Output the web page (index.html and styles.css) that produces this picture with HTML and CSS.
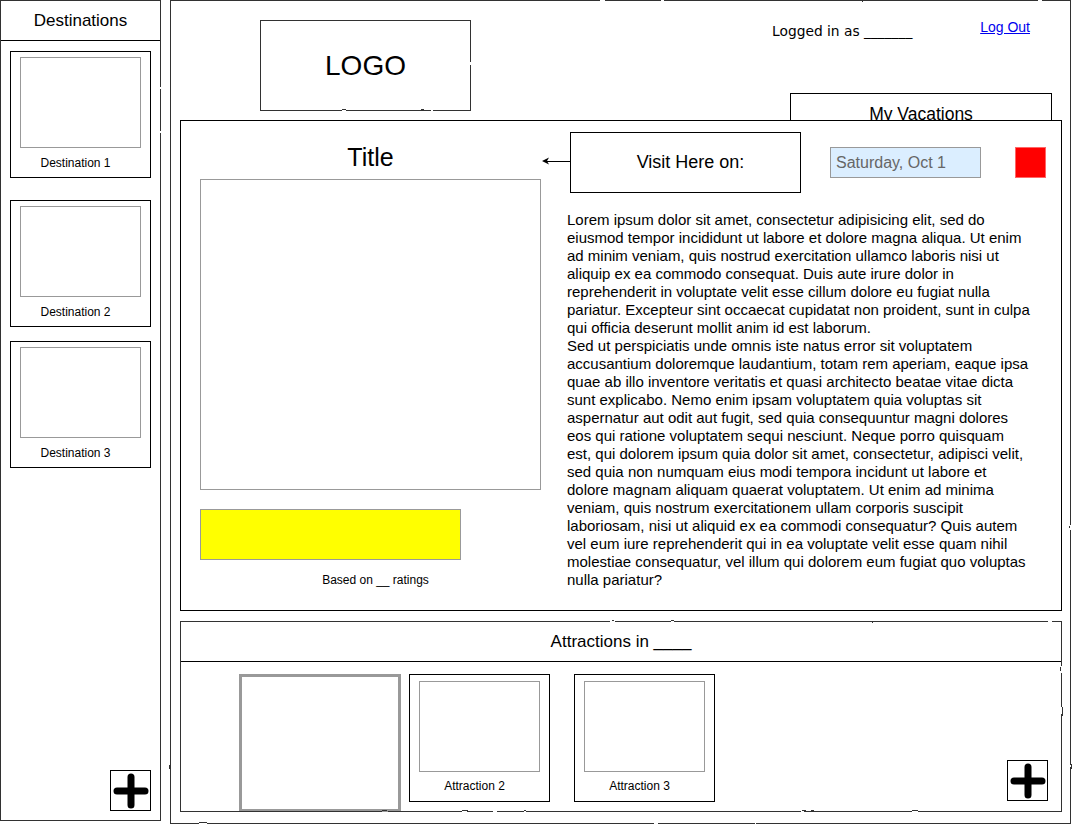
FILE: index.html
```html
<!DOCTYPE html>
<html>
<head>
    <title>Vacation Planner</title>
    <link rel="stylesheet" href="styles.css">
</head>
<body>

    <!-- wobbly pencil line used by the sketch frames -->
    <svg class="defs" width="0" height="0">
        <filter id="rough" x="-2%" y="-2%" width="104%" height="104%">
            <feTurbulence type="fractalNoise" baseFrequency="0.05" numOctaves="2" seed="3" />
            <feDisplacementMap in="SourceGraphic" scale="2" />
        </filter>
    </svg>

    <div class="sidebar rough">
        <div class="sidebar-head">Destinations</div>

        <div class="dest-list">
            <div class="card dest-card">
                <div class="thumb"></div>
                <p class="card-label">Destination 1</p>
            </div>
            <div class="card dest-card second">
                <div class="thumb"></div>
                <p class="card-label">Destination 2</p>
            </div>
            <div class="card dest-card third">
                <div class="thumb"></div>
                <p class="card-label">Destination 3</p>
            </div>
        </div>

        <div class="add-btn side-add">
            <svg width="38" height="38" viewBox="0 0 38 38">
                <path d="M19 5 V33 M5 19 H33" stroke="#000" stroke-width="7" stroke-linecap="round" fill="none" />
            </svg>
        </div>
    </div>

    <div class="main rough">
        <div class="topbar">
            <div class="logo rough">LOGO</div>

            <div class="account">
                <div class="login-row">
                    <span class="logged">Logged in as _______</span>
                    <a href="#" class="logout">Log Out</a>
                </div>
                <div class="vacations">My Vacations</div>
            </div>
        </div>

        <div class="detail">
            <div class="detail-left">
                <h2 class="title">Title</h2>
                <div class="photo"></div>
                <div class="rating"></div>
                <p class="rating-note">Based on __ ratings</p>
            </div>

            <div class="detail-right">
                <div class="visit-row">
                    <svg class="arrow" width="29" height="10" viewBox="0 0 29 10">
                        <path d="M29 5.5 H3" stroke="#000" stroke-width="1" fill="none" />
                        <path d="M1 5 L8 1.5 L6 5 L8 8.5 Z" fill="#000" />
                    </svg>
                    <div class="visit-box">Visit Here on:</div>
                    <div class="date-field">Saturday, Oct 1</div>
                    <div class="red-btn"></div>
                </div>

                <!-- line breaks kept as in the mockup -->
                <p class="blurb">Lorem ipsum dolor sit amet, consectetur adipisicing elit, sed do<br>
eiusmod tempor incididunt ut labore et dolore magna aliqua. Ut enim<br>
ad minim veniam, quis nostrud exercitation ullamco laboris nisi ut<br>
aliquip ex ea commodo consequat. Duis aute irure dolor in<br>
reprehenderit in voluptate velit esse cillum dolore eu fugiat nulla<br>
pariatur. Excepteur sint occaecat cupidatat non proident, sunt in culpa<br>
qui officia deserunt mollit anim id est laborum.<br>
Sed ut perspiciatis unde omnis iste natus error sit voluptatem<br>
accusantium doloremque laudantium, totam rem aperiam, eaque ipsa<br>
quae ab illo inventore veritatis et quasi architecto beatae vitae dicta<br>
sunt explicabo. Nemo enim ipsam voluptatem quia voluptas sit<br>
aspernatur aut odit aut fugit, sed quia consequuntur magni dolores<br>
eos qui ratione voluptatem sequi nesciunt. Neque porro quisquam<br>
est, qui dolorem ipsum quia dolor sit amet, consectetur, adipisci velit,<br>
sed quia non numquam eius modi tempora incidunt ut labore et<br>
dolore magnam aliquam quaerat voluptatem. Ut enim ad minima<br>
veniam, quis nostrum exercitationem ullam corporis suscipit<br>
laboriosam, nisi ut aliquid ex ea commodi consequatur? Quis autem<br>
vel eum iure reprehenderit qui in ea voluptate velit esse quam nihil<br>
molestiae consequatur, vel illum qui dolorem eum fugiat quo voluptas<br>
nulla pariatur?</p>
            </div>
        </div>

        <div class="attractions rough">
            <div class="attr-head">Attractions in ____</div>
            <div class="attr-list">
                <div class="attr-empty"></div>
                <div class="card attr-card">
                    <div class="thumb"></div>
                    <p class="card-label">Attraction 2</p>
                </div>
                <div class="card attr-card">
                    <div class="thumb"></div>
                    <p class="card-label">Attraction 3</p>
                </div>
                <div class="add-btn attr-add">
                    <svg width="38" height="38" viewBox="0 0 38 38">
                        <path d="M19 5 V33 M5 19 H33" stroke="#000" stroke-width="7" stroke-linecap="round" fill="none" />
                    </svg>
                </div>
            </div>
        </div>
    </div>

</body>
</html>
```

FILE: styles.css
```css
body {
    margin: 0;
    display: flex;
    font-family: "Liberation Sans", Arial, sans-serif;
    color: #000;
    background-color: #fff;
}

.defs {
    position: absolute;
}

/* sketchy frame drawn on a pseudo element so only the line wobbles */
.rough {
    position: relative;
}
.rough::before {
    content: "";
    position: absolute;
    inset: 0;
    border: 1.5px solid #333;
    filter: url(#rough);
    pointer-events: none;
}

/* ---------- sidebar ---------- */
.sidebar {
    width: 161px;
    height: 821px;
    box-sizing: border-box;
    display: flex;
    flex-direction: column;
}
.sidebar-head {
    height: 41px;
    box-sizing: border-box;
    border: 1px solid #000;
    display: flex;
    align-items: center;
    justify-content: center;
    font-size: 17px;
    padding-top: 1px;
}
.dest-list {
    display: flex;
    flex-direction: column;
    padding: 10px 0 0 10px;
}
.card {
    box-sizing: border-box;
    border: 1px solid #000;
    background-color: #fff;
    display: flex;
    flex-direction: column;
    align-items: center;
}
.dest-card {
    width: 141px;
    height: 127px;
    padding-top: 5px;
}
.dest-card.second {
    margin-top: 22px;
}
.dest-card.third {
    margin-top: 14px;
}
.thumb {
    width: 121px;
    height: 91px;
    box-sizing: border-box;
    border: 1px solid #999;
}
.card-label {
    margin: 7px 10px 0 0;
    font-size: 12px;
    line-height: 16px;
}

.add-btn {
    width: 41px;
    height: 41px;
    box-sizing: border-box;
    border: 1px solid #000;
    display: flex;
    align-items: center;
    justify-content: center;
    background-color: #fff;
}
.side-add {
    margin-top: auto;
    align-self: flex-end;
    margin-right: 10px;
    margin-bottom: 10px;
}

/* ---------- main frame ---------- */
.main {
    width: 901px;
    height: 824px;
    margin-left: 9px;
    box-sizing: border-box;
    display: flex;
    flex-direction: column;
}
.topbar {
    height: 120px;
    display: flex;
    overflow: hidden;
    flex-shrink: 0;
}
.logo {
    width: 211px;
    height: 91px;
    margin: 20px 0 0 90px;
    display: flex;
    align-items: center;
    justify-content: center;
    font-size: 28px;
    padding-top: 1px;
    box-sizing: border-box;
}
.account {
    margin-left: auto;
    margin-right: 19px;
    width: 280px;
    display: flex;
    flex-direction: column;
}
.login-row {
    display: flex;
    justify-content: space-between;
    padding: 19px 22px 0 0;
}
.logged {
    padding-top: 4px;
    font-family: "DejaVu Sans", Verdana, sans-serif;
    font-size: 13.8px;
}
.logout {
    color: #00e;
    text-decoration: underline;
    font-size: 14px;
}
.vacations {
    margin: 54px 0 0 18px;
    height: 40px;
    box-sizing: border-box;
    border: 1px solid #000;
    text-align: center;
    font-size: 17.5px;
    padding-top: 10px;
}

/* ---------- detail panel ---------- */
.detail {
    margin: 0 9px 0 10px;
    height: 491px;
    box-sizing: border-box;
    border: 1px solid #000;
    display: flex;
    flex-shrink: 0;
}
.detail-left {
    width: 341px;
    padding: 22px 0 0 19px;
    flex-shrink: 0;
}
.title {
    margin: 0;
    font-size: 25px;
    font-weight: normal;
    line-height: 28px;
    text-align: center;
}
.photo {
    margin-top: 8px;
    height: 311px;
    box-sizing: border-box;
    border: 1px solid #999;
}
.rating {
    margin-top: 19px;
    width: 261px;
    height: 51px;
    box-sizing: border-box;
    border: 1px solid #999;
    background-color: #ffff00;
}
.rating-note {
    margin: 12px 0 0 0;
    padding-left: 10px;
    font-size: 12px;
    line-height: 16px;
    text-align: center;
}

.detail-right {
    flex: 1;
}
.visit-row {
    display: flex;
    align-items: center;
    margin-top: 11px;
}
.arrow {
    display: block;
    margin-top: -3px;
}
.visit-box {
    width: 231px;
    height: 61px;
    box-sizing: border-box;
    border: 1px solid #000;
    display: flex;
    align-items: center;
    justify-content: center;
    font-size: 18px;
    padding-left: 10px;
}
.date-field {
    margin-left: 29px;
    width: 151px;
    height: 31px;
    box-sizing: border-box;
    border: 1px solid #999;
    background-color: #dbeeff;
    color: #666;
    font-size: 16px;
    line-height: 29px;
    padding-left: 5px;
}
.red-btn {
    margin-left: 34px;
    width: 31px;
    height: 31px;
    box-sizing: border-box;
    border: 1px solid #f66;
    background-color: #ff0000;
}
.blurb {
    margin: 18px 0 0 26px;
    white-space: nowrap;
    font-size: 15px;
    line-height: 18px;
}

/* ---------- attractions ---------- */
.attractions {
    margin: 10px 9px 0 10px;
    height: 191px;
    box-sizing: border-box;
    display: flex;
    flex-direction: column;
}
.attr-head {
    height: 41px;
    box-sizing: border-box;
    border-bottom: 1px solid #000;
    display: flex;
    align-items: center;
    justify-content: center;
    font-size: 17px;
    padding-top: 1px;
}
.attr-list {
    flex: 1;
    display: flex;
    align-items: flex-start;
    padding: 12px 0 0 59px;
}
.attr-empty {
    width: 162px;
    height: 138px;
    box-sizing: border-box;
    border: 3px solid #999;
    background-color: #fff;
}
.attr-card {
    width: 141px;
    height: 128px;
    padding-top: 6px;
    margin-left: 8px;
}
.attr-card + .attr-card {
    margin-left: 24px;
}
.attr-card .card-label {
    margin-top: 6px;
}
.attr-add {
    margin-left: auto;
    margin-right: 14px;
    margin-top: 86px;
}
```
